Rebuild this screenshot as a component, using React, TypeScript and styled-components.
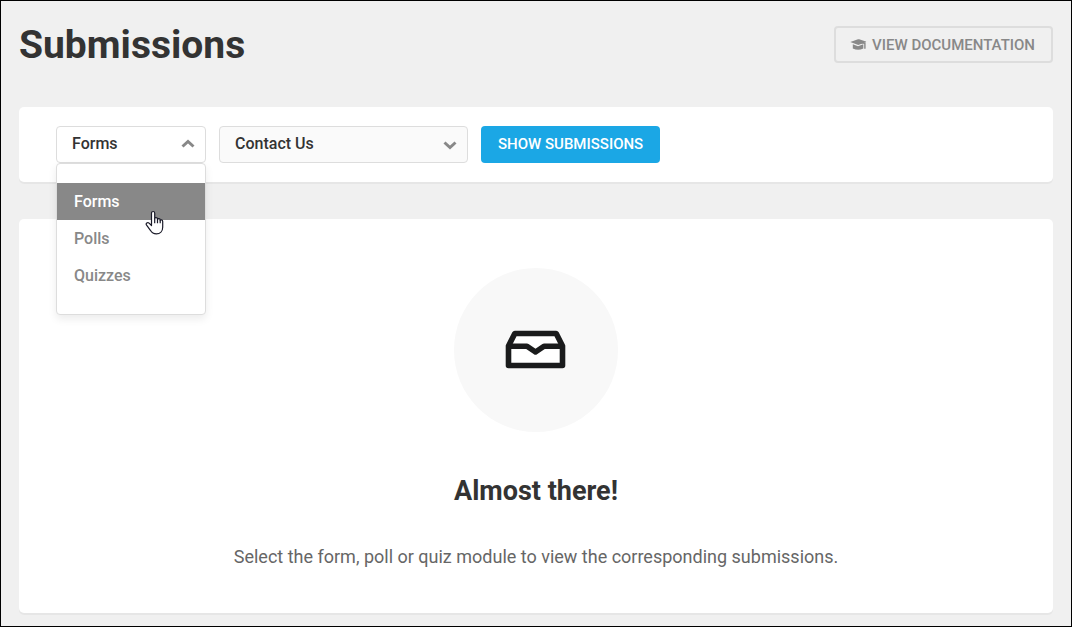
import React, { useState } from "react";
import styled, { createGlobalStyle } from "styled-components";

const GlobalStyle = createGlobalStyle`
  *, *::before, *::after { box-sizing: border-box; }
  body {
    margin: 0;
    background: #f0f0f0;
    color: #333;
    font-family: Roboto, "Liberation Sans", sans-serif;
  }
`;

const Page = styled.main`
  position: relative;
  min-height: 100vh;
  padding: 18px 18px 13px;
  border: 1px solid #000;
  display: flex;
  flex-direction: column;
`;

const Header = styled.header`
  display: flex;
  align-items: center;
  justify-content: space-between;
  height: 51px;
  margin-bottom: 37px;
`;

const Title = styled.h1`
  margin: 0;
  font-size: 39px;
  line-height: 52px;
  font-weight: 700;
`;

const DocsLink = styled.a`
  display: flex;
  align-items: center;
  gap: 5px;
  height: 37px;
  padding: 0 16px 0 14px;
  border: 2px solid #ddd;
  border-radius: 4px;
  color: #888;
  font-size: 15px;
  line-height: 20px;
  font-weight: 500;
  text-decoration: none;
  text-transform: uppercase;
`;

const Card = styled.section`
  background: #fff;
  border-radius: 5px;
  box-shadow: 0 2px 0 #e6e6e6;
`;

const Toolbar = styled(Card)`
  display: flex;
  gap: 13px;
  padding: 19px 37px;
  margin-bottom: 37px;
`;

const Field = styled.div<{ $width: number }>`
  position: relative;
  width: ${(p) => p.$width}px;
`;

const Select = styled.select<{ $open?: boolean }>`
  appearance: none;
  display: block;
  width: 100%;
  height: 37px;
  padding: 0 32px 2px 15px;
  border: 1px solid #ddd;
  border-radius: 4px;
  background: ${(p) => (p.$open ? "#fff" : "#fafafa")};
  color: #333;
  font: 500 16px/20px Roboto, "Liberation Sans", sans-serif;
`;

const Chevron = styled.svg<{ $up?: boolean }>`
  position: absolute;
  right: 11px;
  top: ${(p) => (p.$up ? 13 : 15)}px;
  width: 14px;
  height: 9px;
  pointer-events: none;
  transform: ${(p) => (p.$up ? "rotate(180deg)" : "none")};
`;

const Menu = styled.ul`
  position: absolute;
  z-index: 1;
  top: 37px;
  left: 0;
  width: 100%;
  margin: 0;
  padding: 19px 0 20px;
  list-style: none;
  background: #fff;
  border: 1px solid #ddd;
  border-radius: 4px;
  box-shadow: 0 4px 8px rgba(0, 0, 0, 0.08);
`;

const MenuItem = styled.button<{ $active: boolean }>`
  display: block;
  width: 100%;
  height: 37px;
  padding: 0 17px;
  border: 0;
  background: ${(p) => (p.$active ? "#888" : "transparent")};
  color: ${(p) => (p.$active ? "#fff" : "#888")};
  font: 500 16px/20px Roboto, "Liberation Sans", sans-serif;
  text-align: left;
  cursor: pointer;
`;

const Primary = styled.button`
  height: 37px;
  padding: 0 17px 2px;
  border: 0;
  border-radius: 4px;
  background: #1ba7e5;
  color: #fff;
  font: 500 15px/20px Roboto, "Liberation Sans", sans-serif;
  text-transform: uppercase;
`;

const EmptyState = styled(Card)`
  flex: 1;
  display: flex;
  flex-direction: column;
  align-items: center;
  padding: 49px 20px 43px;
  text-align: center;
`;

const Disc = styled.div`
  display: grid;
  place-items: center;
  width: 164px;
  height: 164px;
  border-radius: 50%;
  background: #f8f8f8;
`;

const Heading = styled.h2`
  margin: 41px 0 35px;
  font-size: 27px;
  line-height: 36px;
  font-weight: 700;
`;

const Message = styled.p`
  margin: 0;
  color: #666;
  font-size: 18px;
  line-height: 26px;
`;

const Pointer = styled.svg`
  position: absolute;
  z-index: 2;
  left: 89px;
  top: 84px;
  width: 20px;
  height: 26px;
  pointer-events: none;
`;

const kinds = ["Forms", "Polls", "Quizzes"];

function ChevronIcon({ up }: { up?: boolean }) {
  return (
    <Chevron $up={up} viewBox="0 0 14 9" aria-hidden="true">
      <path d="M1.5 1.5 7 6.5 12.5 1.5" fill="none" stroke="#888" strokeWidth="3" />
    </Chevron>
  );
}

export default function App() {
  const [kind, setKind] = useState("Forms");
  return (
    <>
      <GlobalStyle />
      <Page>
        <Header>
          <Title>Submissions</Title>
          <DocsLink href="#documentation">
            <svg width="17" height="13" viewBox="0 0 17 13" aria-hidden="true">
              <path d="M.3 4 8 1.300q.6-.2 1.200 0l6.700 2.100q.6.4 0 .8L8.900 6.800q-.6.2-1.200 0z" fill="#888" />
              <path d="M2.800 6.200 8 8.200l5.300-2v4.200Q8.200 13.200 2.800 10.400z" fill="#888" />
              <path d="M8.300 4.300 14.900 5.300v5.500" fill="none" stroke="#888" strokeWidth="1.400" />
            </svg>
            View Documentation
          </DocsLink>
        </Header>
        <Toolbar aria-label="Filters">
          <Field $width={150}>
            <Select $open aria-label="Module type" value={kind} onChange={(e) => setKind(e.target.value)}>
              {kinds.map((k) => (
                <option key={k}>{k}</option>
              ))}
            </Select>
            <ChevronIcon up />
            <Menu>
              {kinds.map((k) => (
                <li key={k}>
                  <MenuItem type="button" $active={k === kind} onClick={() => setKind(k)}>
                    {k}
                  </MenuItem>
                </li>
              ))}
            </Menu>
            <Pointer viewBox="0 0 20 26" aria-hidden="true">
              <path
                d="M6.500 15.500V3.200c0-2.300 3.200-2.300 3.200 0v5.600c0-1.700 2.800-1.600 2.800.2v.6c.2-1.400 2.700-1.200 2.700.5v.6c.3-1.300 2.500-1 2.500.8v5.800c0 4-2.700 6.600-6.300 6.600-3.200 0-4.700-1.300-6-3.600L1.600 15.200c-1.300-2 1-3.400 2.500-2.100z"
                fill="#fff"
                stroke="#1a1a28"
                strokeWidth="1.200"
                strokeLinejoin="round"
              />
              <path d="M9.700 8.500v4.800M12.500 9.200v4.100M15.200 10.200v3.100" fill="none" stroke="#1a1a28" strokeWidth="1.200" />
            </Pointer>
          </Field>
          <Field $width={249}>
            <Select aria-label="Form" defaultValue="Contact Us">
              <option>Contact Us</option>
            </Select>
            <ChevronIcon />
          </Field>
          <Primary type="button">Show Submissions</Primary>
        </Toolbar>
        <EmptyState>
          <Disc>
            <svg width="62" height="40" viewBox="0 0 62 40" aria-hidden="true">
              <path
                d="M3.500 16 9.800 3.500h41.400L57.500 16v19.500h-54z"
                fill="#fff"
                stroke="#1a1b1c"
                strokeWidth="5.600"
                strokeLinejoin="round"
              />
              <path
                d="M3.500 16.200h18.500L30.500 22l8.500-5.800h18.500"
                fill="none"
                stroke="#1a1b1c"
                strokeWidth="5.500"
                strokeLinejoin="round"
              />
            </svg>
          </Disc>
          <Heading>Almost there!</Heading>
          <Message>Select the form, poll or quiz module to view the corresponding submissions.</Message>
        </EmptyState>
      </Page>
    </>
  );
}
